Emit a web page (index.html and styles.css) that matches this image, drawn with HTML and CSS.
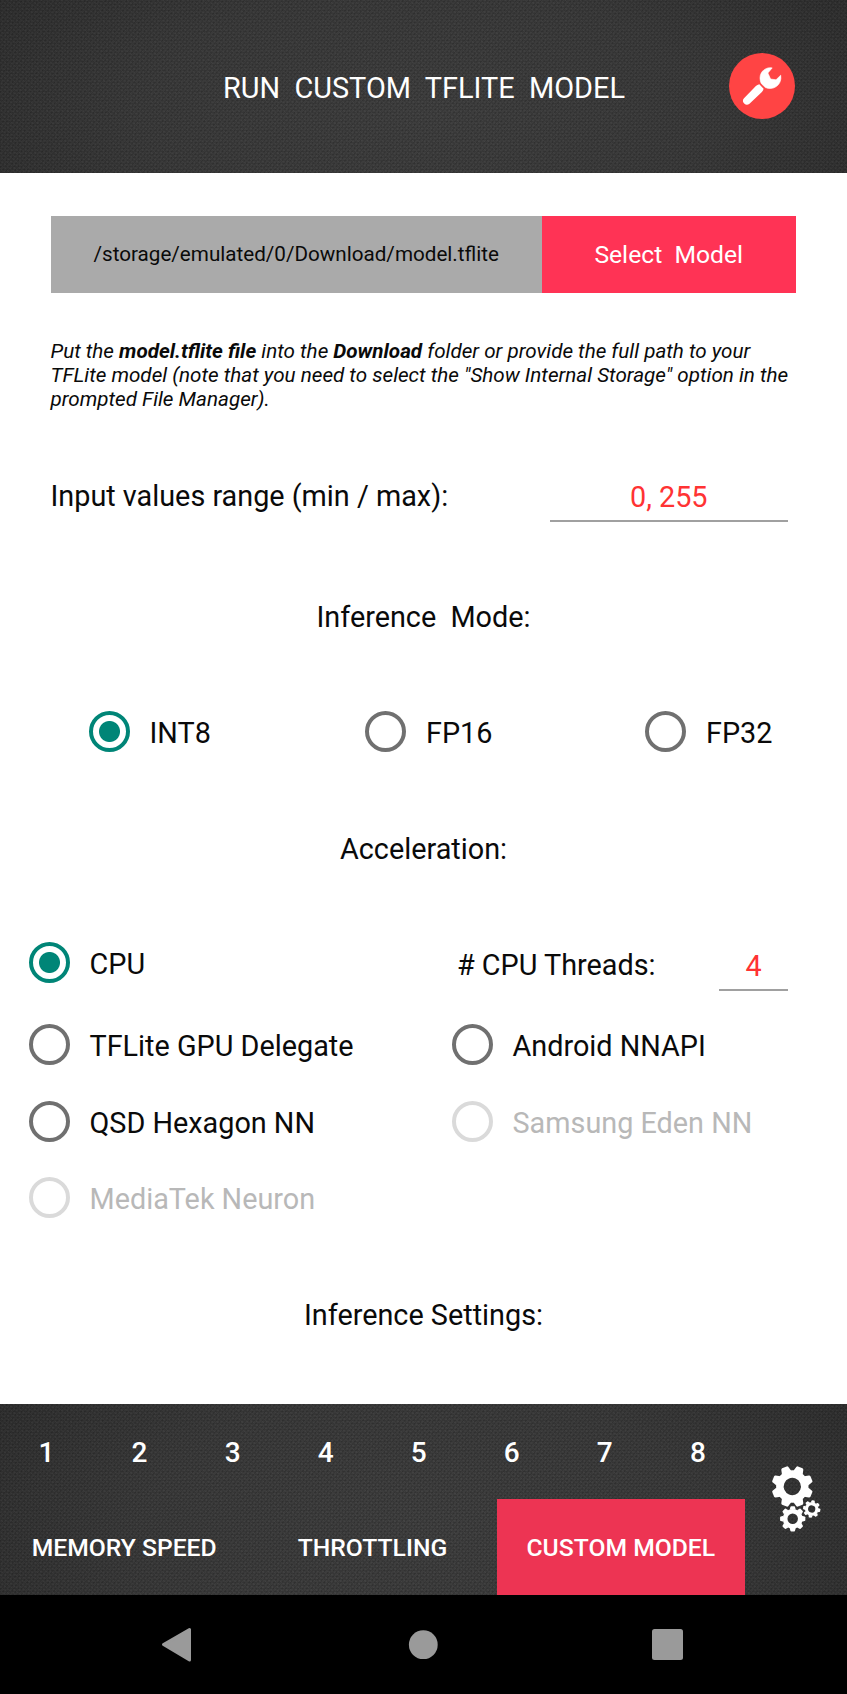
FILE: index.html
```html
<!DOCTYPE html>
<html lang="en">
<head>
<meta charset="utf-8">
<title>Run Custom TFLite Model</title>
<link rel="stylesheet" href="styles.css">
</head>
<body>
<header class="header fabric">
  <h1 class="title">RUN  CUSTOM  TFLITE  MODEL</h1>
  <button class="tool" aria-label="Settings">
    <svg width="66" height="66" viewBox="0 0 66 66">
      <circle cx="33" cy="33" r="33" fill="#ff4444"/>
      <path d="M43.200 14.900C37 13.600 31 18.500 31 25C31 27.200 31.500 29 32.400 30.700L36.300 34.500C43.500 38 53.500 32.500 51.700 22.200L47 26.800L41.600 26L38.900 20Z" fill="#fff" stroke="#fff" stroke-width=".6" stroke-linejoin="round"/>
      <path d="M30.300 31.200L34.600 35.800Q34.200 37.700 32.900 39L20.500 50.700A3.900 3.900 0 0 1 15 45.200L26.900 33.100Q28.200 31.600 30.300 31.200Z" fill="#fff"/>
    </svg>
  </button>
</header>
<main class="content">
  <div class="picker">
    <div class="path">/storage/emulated/0/Download/model.tflite</div>
    <button class="select">Select  Model</button>
  </div>
  <p class="hint">Put the <b>model.tflite file</b> into the <b>Download</b> folder or provide the full path to your<br>TFLite model (note that you need to select the "Show Internal Storage" option in the<br>prompted File Manager).</p>
  <div class="range">
    <span class="range-label">Input values range (min / max):</span>
    <span class="field">0, 255</span>
  </div>
  <h2 class="heading mode-heading">Inference  Mode:</h2>
  <div class="modes">
    <label class="option"><i class="radio checked"></i><span>INT8</span></label>
    <label class="option"><i class="radio"></i><span>FP16</span></label>
    <label class="option"><i class="radio"></i><span>FP32</span></label>
  </div>
  <h2 class="heading accel-heading">Acceleration:</h2>
  <div class="accel">
    <label class="option"><i class="radio checked"></i><span>CPU</span></label>
    <div class="threads"><span class="threads-label"># CPU Threads:</span><span class="field">4</span></div>
    <label class="option"><i class="radio"></i><span>TFLite GPU Delegate</span></label>
    <label class="option"><i class="radio"></i><span>Android NNAPI</span></label>
    <label class="option"><i class="radio"></i><span>QSD Hexagon NN</span></label>
    <label class="option disabled"><i class="radio"></i><span>Samsung Eden NN</span></label>
    <label class="option disabled"><i class="radio"></i><span>MediaTek Neuron</span></label>
  </div>
  <h2 class="heading settings-heading">Inference Settings:</h2>
</main>
<footer class="footer fabric">
  <div class="menus">
    <nav class="numbers"><span>1</span><span>2</span><span>3</span><span>4</span><span>5</span><span>6</span><span>7</span><span>8</span></nav>
    <nav class="tabs"><span class="tab">MEMORY SPEED</span><span class="tab">THROTTLING</span><span class="tab active">CUSTOM MODEL</span></nav>
  </div>
  <svg class="gears" width="52" height="68" viewBox="0 0 52 68" fill="#fff">
    <defs>
      <path id="tooth" d="M-5-15L-3.800-19.500Q-3.500-20.600-2.500-20.700H2.500Q3.500-20.600 3.800-19.500L5-15Z"/>
      <g id="gear">
        <circle r="12.400" fill="none" stroke="#fff" stroke-width="7.600"/>
        <use href="#tooth"/><use href="#tooth" transform="rotate(45)"/><use href="#tooth" transform="rotate(90)"/><use href="#tooth" transform="rotate(135)"/><use href="#tooth" transform="rotate(180)"/><use href="#tooth" transform="rotate(225)"/><use href="#tooth" transform="rotate(270)"/><use href="#tooth" transform="rotate(315)"/>
      </g>
    </defs>
    <use href="#gear" transform="translate(22.300 21.500) rotate(22.500)"/>
    <use href="#gear" transform="translate(22.700 53.800) scale(.61)"/>
    <use href="#gear" transform="translate(41.700 44) rotate(10) scale(.42)"/>
  </svg>
</footer>
<nav class="system">
  <svg width="847" height="99" viewBox="0 0 847 99" fill="#9a9a9a">
    <path d="M163.500 49.500L189.500 34.500V65Z" stroke="#9a9a9a" stroke-width="3" stroke-linejoin="round"/>
    <circle cx="423.300" cy="49.700" r="14.400"/>
    <rect x="652" y="34" width="31" height="31" rx="2.500"/>
  </svg>
</nav>
</body>
</html>
```
FILE: styles.css
```css
* { box-sizing: border-box; }
body {
  margin: 0;
  width: 847px;
  height: 1694px;
  display: flex;
  flex-direction: column;
  overflow: hidden;
  background: #fff;
  color: #0a0a0a;
  font: 28.8px/54px Roboto, sans-serif;
}
button { border: 0; padding: 0; font: inherit; }
h1, h2, p { margin: 0; font-weight: 400; }
.fabric {
  background:
    repeating-linear-gradient(38deg, rgba(255,255,255,.025) 0 1px, transparent 1px 3.1px),
    repeating-linear-gradient(-52deg, rgba(0,0,0,.1) 0 1.2px, transparent 1.2px 3.3px),
    repeating-linear-gradient(0deg, rgba(0,0,0,.08) 0 1px, transparent 1px 3px),
    repeating-linear-gradient(90deg, rgba(0,0,0,.06) 0 1px, transparent 1px 3px),
    radial-gradient(ellipse 60% 130% at 50% 65%, #3f3f3f, #3a3a3a 55%, #2f2f2f);
  color: #fff;
}
.header {
  height: 173px;
  flex: none;
  display: grid;
  grid-template-columns: 1fr 66px;
  padding: 53px 52px 0 51px;
}
.title {
  font-size: 28.9px;
  line-height: 71px;
  text-align: center;
  padding-left: 68px;
  white-space: pre;
}
.tool { width: 66px; height: 66px; background: none; }
.tool svg { display: block; }
.content { height: 1230.500px; flex: none; padding-top: 43px; }
.picker {
  height: 77px;
  margin: 0 51px;
  display: grid;
  grid-template-columns: 490.500px 1fr;
  text-align: center;
  line-height: 77px;
}
.path { background: #aaa; font-size: 20.650px; }
.select { background: #ff3355; color: #fff; font-size: 24.700px; white-space: pre; }
.hint {
  margin: 46px 0 0 50.500px;
  height: 73px;
  font-size: 20.650px;
  line-height: 24.200px;
  font-style: italic;
  white-space: nowrap;
}
.range {
  margin: 56px 59.500px 0 50.500px;
  height: 54px;
  display: flex;
  justify-content: space-between;
}
.range-label, .threads-label { line-height: 56px; }
.field {
  height: 54px;
  width: 237.500px;
  line-height: 59px;
  color: #ff3333;
  text-align: center;
  border-bottom: 2px solid #a0a0a0;
}
.heading { font-size: 28.800px; text-align: center; white-space: pre; }
.mode-heading { margin-top: 68px; }
.modes {
  margin: 60px 0 0 88.500px;
  display: grid;
  grid-template-columns: 276.500px 280px auto;
}
.option { display: flex; align-items: center; white-space: nowrap; }
.option span { padding-top: 3px; }
.modes .option { height: 54px; }
.radio {
  width: 41px;
  height: 41px;
  margin-right: 20px;
  border: 4px solid #707070;
  border-radius: 50%;
}
.radio.checked {
  border-color: #008577;
  background: radial-gradient(circle, #008577 10px, transparent 11px);
}
.disabled { color: #b8b8b8; }
.disabled .radio { border-color: #dadada; }
.accel-heading { margin-top: 64px; }
.accel {
  margin: 59.500px 0 0 28.500px;
  display: grid;
  grid-template-columns: 423px 1fr;
  grid-template-rows: 71px 76.500px 76.500px 76.500px;
}
.accel .option:first-child { height: 54px; }
.threads {
  display: flex;
  justify-content: space-between;
  margin: 1px 59px 0 5.500px;
}
.threads .field { width: 69px; }
.settings-heading { margin-top: 51.500px; }
.footer {
  height: 191.500px;
  flex: none;
  display: grid;
  grid-template-columns: 745px 1fr;
}
.numbers {
  height: 95.500px;
  display: grid;
  grid-template-columns: repeat(8, 93.050px);
  text-align: center;
  font-size: 28px;
  font-weight: 500;
  line-height: 97px;
}
.tabs {
  height: 96px;
  display: grid;
  grid-template-columns: repeat(3, 1fr);
  text-align: center;
  font-size: 24.700px;
  font-weight: 500;
  line-height: 98px;
}
.active { background: #ed3453; }
.gears { margin: 61.500px 0 0 25px; }
.system { height: 99px; flex: none; background: #000; }
.system svg { display: block; }
```
